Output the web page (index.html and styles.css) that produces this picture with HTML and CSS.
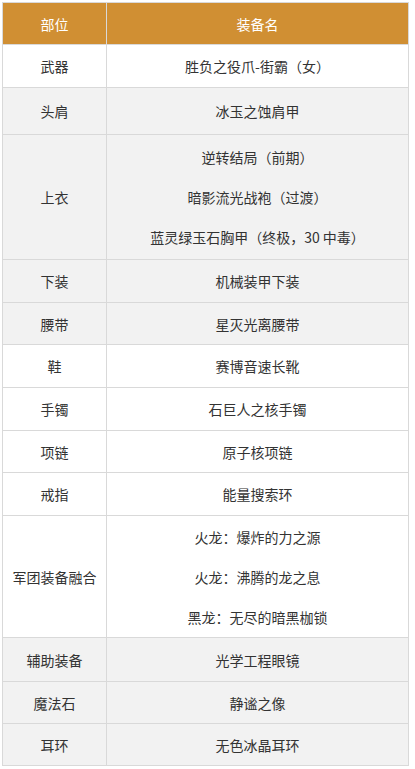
FILE: index.html
```html
<!DOCTYPE html>
<html lang="zh-CN">
<head>
<meta charset="utf-8">
<title>装备表</title>
<link rel="stylesheet" href="styles.css">
</head>
<body>
<table class="equip">
  <thead>
    <tr class="head"><th class="col-slot">部位</th><th>装备名</th></tr>
  </thead>
  <tbody>
    <tr class="white"><td>武器</td><td>胜负之役爪-街霸（女）</td></tr>
    <tr class="grey r46"><td>头肩</td><td>冰玉之蚀肩甲</td></tr>
    <tr class="grey r124"><td>上衣</td><td><div class="line">逆转结局（前期）</div><div class="line">暗影流光战袍（过渡）</div><div class="line">蓝灵绿玉石胸甲（终极，30 中毒）</div></td></tr>
    <tr class="grey"><td>下装</td><td>机械装甲下装</td></tr>
    <tr class="grey r41"><td>腰带</td><td>星灭光离腰带</td></tr>
    <tr class="white"><td>鞋</td><td>赛博音速长靴</td></tr>
    <tr class="white"><td>手镯</td><td>石巨人之核手镯</td></tr>
    <tr class="white r41"><td>项链</td><td>原子核项链</td></tr>
    <tr class="white"><td>戒指</td><td>能量搜索环</td></tr>
    <tr class="white r121"><td>军团装备融合</td><td><div class="line">火龙：爆炸的力之源</div><div class="line">火龙：沸腾的龙之息</div><div class="line">黑龙：无尽的暗黑枷锁</div></td></tr>
    <tr class="grey r43"><td>辅助装备</td><td>光学工程眼镜</td></tr>
    <tr class="grey r41"><td>魔法石</td><td>静谧之像</td></tr>
    <tr class="grey r41"><td>耳环</td><td>无色冰晶耳环</td></tr>
  </tbody>
</table>
</body>
</html>
```

FILE: styles.css
```css
html, body {
  margin: 0;
  padding: 0;
  background: #ffffff;
}
body {
  padding: 2px;
  font-family: "Noto Sans CJK SC", "Noto Sans", "Liberation Sans", sans-serif;
  font-size: 14px;
  color: #333333;
}
.equip {
  border-collapse: collapse;
  width: 407px;
  table-layout: fixed;
}
.equip th, .equip td {
  border: 1px solid #d9d9d9;
  padding: 0;
  text-align: center;
  vertical-align: middle;
  line-height: 20px;
  height: 42px;
}
.equip .col-slot {
  width: 103px;
}
.head th {
  background: #d08f33;
  color: #ffffff;
  font-weight: normal;
  height: 41px;
}
.white td { background: #ffffff; }
.grey td { background: #f2f2f2; }
.r41 td { height: 41px; }
.r43 td { height: 43px; }
.r46 td { height: 46px; }
.r124 td { height: 124px; }
.r121 td { height: 121px; }
.line {
  line-height: 40px;
  height: 40px;
}
```
